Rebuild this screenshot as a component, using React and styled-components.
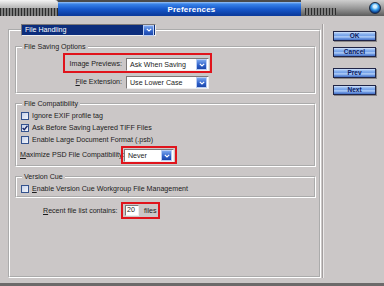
import React from "react";
import styled, { createGlobalStyle } from "styled-components";

const GlobalStyle = createGlobalStyle`
  html, body { margin: 0; padding: 0; }
  body {
    width: 384px;
    height: 286px;
    overflow: hidden;
    background: #cbc7c7;
    font-family: "Liberation Sans", Arial, sans-serif;
  }
`;

const Window = styled.div`
  width: 384px;
  height: 286px;
  box-sizing: border-box;
  display: flex;
  flex-direction: column;
  background: #cbc7c7;
  border-bottom: 3px solid #6c6a6a;
  font-size: 7.1px;
  color: #1c1c1c;
`;

const TitleBar = styled.div`
  display: flex;
  height: 16px;
  flex: none;
  background: #4a4a4a;
`;

const ribs = "repeating-linear-gradient(90deg, #2c2c2c 0 1px, #7e7e7e 1px 3px)";

const TitleCap = styled.div`
  width: 58px;
  background: ${ribs} 0 100% / 100% 8px no-repeat, linear-gradient(#f4f4f4, #bdbdbd 7px);
  border-top-right-radius: 3px;
`;

const TitleBand = styled.div`
  flex: 1;
  margin-top: 2px;
  padding-left: 24px;
  display: flex;
  align-items: center;
  justify-content: center;
  background: linear-gradient(#9cc4f6 0, #3a84e8 2px, #1658cc 7px, #0b3b9e 13px);
  color: #fff;
  font-weight: bold;
  font-size: 8px;
  letter-spacing: 0.2px;
`;

const TitleRight = styled.div`
  width: 83px;
  display: flex;
  align-items: center;
  padding: 0 3px 0 4px;
  box-sizing: border-box;
  background: linear-gradient(#cfcfcf, #9a9a9a 8px, #5c5c5c);
`;

const Ribs = styled.div`
  width: 31px;
  height: 7px;
  align-self: flex-end;
  margin-bottom: 1px;
  background: ${ribs};
`;

const CloseOrb = styled.div`
  margin-left: auto;
  width: 10px;
  height: 10px;
  border-radius: 50%;
  border: 1px solid #1c2a40;
  background: radial-gradient(circle at 50% 35%, #d4f0ff 0 1.5px, #39a0ec 3.5px, #0b3f90 6px);
`;

const Body = styled.div`
  flex: 1;
  display: flex;
  padding: 8px 0 0 8px;
`;

const Panel = styled.fieldset`
  margin: 0;
  width: 313px;
  height: 254px;
  box-sizing: border-box;
  border: 2px groove #fff;
  padding: 6px 3px 0 5px;
  min-width: 0;
`;

const PanelLegend = styled.legend`
  padding: 0;
  margin-left: 6px;
`;

const Group = styled.fieldset`
  margin: ${(p) => p.top}px 0 0;
  border: 2px groove #fff;
  padding: 1px 0 ${(p) => p.bottom}px 4px;
  min-width: 0;
`;

const GroupLegend = styled.legend`
  padding: 0 2px;
  margin-left: 1px;
  line-height: 10px;
`;

const Select = styled.div`
  display: flex;
  align-items: center;
  box-sizing: border-box;
  width: ${(p) => p.w}px;
  height: ${(p) => p.h || 13}px;
  padding: 0 1px 0 3px;
  background: ${(p) => (p.selected ? "#0c2d7c" : "#fff")};
  color: ${(p) => (p.selected ? "#fff" : "#1c1c1c")};
  border: 1px solid;
  border-color: #7c7878 #eeeeee #eeeeee #7c7878;
  flex: none;
`;

const SelectValue = styled.span`
  flex: 1;
  white-space: nowrap;
`;

const ArrowButton = styled.span`
  width: 9px;
  height: 9px;
  display: flex;
  align-items: center;
  justify-content: center;
  border: 1px solid #b9cdf4;
  background: linear-gradient(#7aa6ee, #2c5ec8 60%, #1c46a8);
`;

const Chevron = () => (
  <svg width="6" height="4" viewBox="0 0 6 4">
    <path d="M0.8 0.8 L3 3 L5.2 0.8" fill="none" stroke="#fff" strokeWidth="1.2" />
  </svg>
);

const Dropdown = ({ value, w, h, selected }) => (
  <Select w={w} h={h} selected={selected}>
    <SelectValue>{value}</SelectValue>
    <ArrowButton>
      <Chevron />
    </ArrowButton>
  </Select>
);

const FieldRow = styled.div`
  display: flex;
  align-items: flex-start;
  gap: 4px;
  width: ${(p) => p.w}px;
  box-sizing: border-box;
  margin-left: ${(p) => p.left}px;
  border: ${(p) => (p.highlight ? "2px solid #e0141c" : "none")};
  padding: ${(p) => (p.highlight ? "3px 1px 0 2px" : "3px 3px 0 4px")};
`;

const FieldLabel = styled.span`
  flex: 1;
  text-align: right;
  line-height: 13px;
  white-space: nowrap;
`;

const CheckRow = styled.label`
  display: flex;
  align-items: center;
  gap: 3px;
  height: 12px;
  white-space: nowrap;
`;

const Box = styled.span`
  width: 6px;
  height: 6px;
  flex: none;
  display: flex;
  align-items: center;
  justify-content: center;
  border: 1px solid #34538e;
  background: linear-gradient(135deg, #c6d2ea, #f4f6fb);
`;

const Check = ({ checked, children }) => (
  <CheckRow>
    <Box>
      {checked && (
        <svg width="6" height="6" viewBox="0 0 6 6">
          <path d="M0.6 3 L2.3 4.8 L5.5 0.8" fill="none" stroke="#18286a" strokeWidth="1.4" />
        </svg>
      )}
    </Box>
    <span>{children}</span>
  </CheckRow>
);

const InlineRow = styled.div`
  display: flex;
  align-items: center;
  margin: ${(p) => p.top || 0}px 0 0 ${(p) => p.left}px;
`;

const InlineLabel = styled.span`
  width: ${(p) => p.w}px;
  white-space: nowrap;
`;

const Highlight = styled.div`
  display: flex;
  align-items: center;
  gap: 5px;
  border: 2px solid #e0141c;
  padding: ${(p) => p.pad};
`;

const NumberBox = styled.div`
  width: 14px;
  height: 11px;
  box-sizing: border-box;
  background: #fff;
  border: 1px solid;
  border-color: #7c7878 #eeeeee #eeeeee #7c7878;
  padding-left: 1px;
  line-height: 9px;
`;

const Sidebar = styled.div`
  flex: 1;
  display: flex;
  flex-direction: column;
  align-items: flex-start;
  padding: 7px 0 0 10px;
  margin-left: 1px;
  border-left: 1px solid #a39f9f;
  box-shadow: inset 1px 0 #ebe9e9;
  margin-bottom: 5px;
`;

const DialogButton = styled.div`
  width: 43px;
  height: 10px;
  box-sizing: border-box;
  margin-top: ${(p) => p.gap}px;
  border: 1px solid #1f2446;
  background: linear-gradient(#d4e4fb 0, #8ab2ee 25%, #78a4ea 45%, #b4d0f8 60%, #6b96e0 80%, #4670c4 100%);
  color: #0d1b5c;
  font-weight: bold;
  font-size: 6.5px;
  line-height: 8px;
  text-align: center;
  box-shadow: 1px 1px 0 #8a8686;
`;

export default function App() {
  return (
    <Window>
      <GlobalStyle />
      <TitleBar>
        <TitleCap />
        <TitleBand>Preferences</TitleBand>
        <TitleRight>
          <Ribs />
          <CloseOrb />
        </TitleRight>
      </TitleBar>
      <Body>
        <Panel>
          <PanelLegend>
            <Dropdown value="File Handling" w={135} h={12} selected />
          </PanelLegend>

          <Group top={0} bottom={3}>
            <GroupLegend>File Saving Options</GroupLegend>
            <FieldRow highlight left={42} w={149}>
              <FieldLabel>Image Previews:</FieldLabel>
              <Dropdown value="Ask When Saving" w={83} />
            </FieldRow>
            <FieldRow left={42} w={149}>
              <FieldLabel>
                <u>F</u>ile Extension:
              </FieldLabel>
              <Dropdown value="Use Lower Case" w={83} />
            </FieldRow>
          </Group>

          <Group top={5} bottom={1}>
            <GroupLegend>File Compatibility</GroupLegend>
            <Check>Ignore EXIF profile tag</Check>
            <Check checked>Ask Before Saving Layered TIFF Files</Check>
            <Check>Enable Large Document Format (.psb)</Check>
            <InlineRow left={-1}>
              <InlineLabel w={101}>
                <u>M</u>aximize PSD File Compatibility:
              </InlineLabel>
              <Highlight pad="1px 1px 0 1px">
                <Dropdown value="Never" w={50} />
              </Highlight>
            </InlineRow>
          </Group>

          <Group top={5} bottom={1}>
            <GroupLegend>Version Cue</GroupLegend>
            <Check>
              <u>E</u>nable Version Cue Workgroup File Management
            </Check>
          </Group>

          <InlineRow left={28} top={4}>
            <InlineLabel w={78}>
              <u>R</u>ecent file list contains:
            </InlineLabel>
            <Highlight pad="1px 1px 1px 2px">
              <NumberBox>20</NumberBox>
              <span>files</span>
            </Highlight>
          </InlineRow>
        </Panel>

        <Sidebar>
          <DialogButton gap={0}>OK</DialogButton>
          <DialogButton gap={6}>Cancel</DialogButton>
          <DialogButton gap={11}>Prev</DialogButton>
          <DialogButton gap={7}>Next</DialogButton>
        </Sidebar>
      </Body>
    </Window>
  );
}
